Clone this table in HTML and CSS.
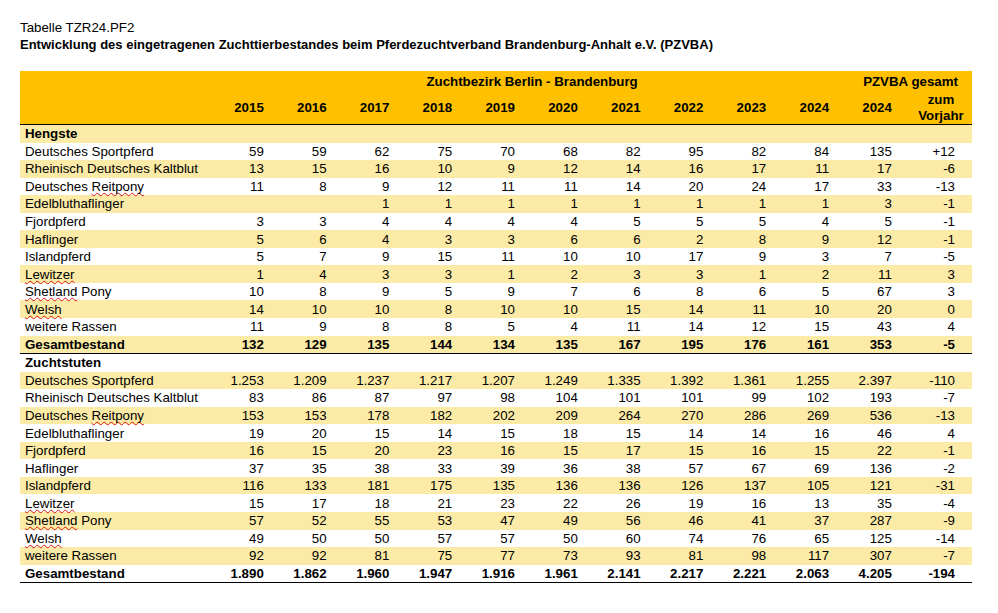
FILE: index.html
```html
<!DOCTYPE html>
<html lang="de">
<head>
<meta charset="utf-8">
<title>Tabelle TZR24.PF2</title>
<link rel="stylesheet" href="styles.css">
</head>
<body>
<div class="page">
  <div class="title">Tabelle TZR24.PF2</div>
  <div class="subtitle">Entwicklung des eingetragenen Zuchttierbestandes beim Pferdezuchtverband Brandenburg-Anhalt e.V. (PZVBA)</div>
  <table class="data">
    <colgroup>
      <col class="c-label">
      <col class="c-num"><col class="c-num"><col class="c-num"><col class="c-num"><col class="c-num">
      <col class="c-num"><col class="c-num"><col class="c-num"><col class="c-num"><col class="c-num">
      <col class="c-num">
      <col class="c-last">
    </colgroup>
    <thead>
      <tr class="h1">
        <th></th>
        <th colspan="10" class="group">Zuchtbezirk Berlin - Brandenburg</th>
        <th colspan="2" class="group2">PZVBA gesamt</th>
      </tr>
      <tr class="h2">
        <th></th>
        <th>2015</th><th>2016</th><th>2017</th><th>2018</th><th>2019</th>
        <th>2020</th><th>2021</th><th>2022</th><th>2023</th><th>2024</th>
        <th>2024</th>
        <th class="vj">zum<br>Vorjahr</th>
      </tr>
    </thead>
    <tbody>
      <tr class="sec"><td>Hengste</td><td></td><td></td><td></td><td></td><td></td><td></td><td></td><td></td><td></td><td></td><td></td><td></td></tr>
      <tr><td>Deutsches Sportpferd</td><td>59</td><td>59</td><td>62</td><td>75</td><td>70</td><td>68</td><td>82</td><td>95</td><td>82</td><td>84</td><td>135</td><td>+12</td></tr>
      <tr><td>Rheinisch Deutsches Kaltblut</td><td>13</td><td>15</td><td>16</td><td>10</td><td>9</td><td>12</td><td>14</td><td>16</td><td>17</td><td>11</td><td>17</td><td>-6</td></tr>
      <tr><td>Deutsches <span class="sp">Reitpony</span></td><td>11</td><td>8</td><td>9</td><td>12</td><td>11</td><td>11</td><td>14</td><td>20</td><td>24</td><td>17</td><td>33</td><td>-13</td></tr>
      <tr><td>Edelbluthaflinger</td><td></td><td></td><td>1</td><td>1</td><td>1</td><td>1</td><td>1</td><td>1</td><td>1</td><td>1</td><td>3</td><td>-1</td></tr>
      <tr><td>Fjordpferd</td><td>3</td><td>3</td><td>4</td><td>4</td><td>4</td><td>4</td><td>5</td><td>5</td><td>5</td><td>4</td><td>5</td><td>-1</td></tr>
      <tr><td>Haflinger</td><td>5</td><td>6</td><td>4</td><td>3</td><td>3</td><td>6</td><td>6</td><td>2</td><td>8</td><td>9</td><td>12</td><td>-1</td></tr>
      <tr><td>Islandpferd</td><td>5</td><td>7</td><td>9</td><td>15</td><td>11</td><td>10</td><td>10</td><td>17</td><td>9</td><td>3</td><td>7</td><td>-5</td></tr>
      <tr><td><span class="sp">Lewitzer</span></td><td>1</td><td>4</td><td>3</td><td>3</td><td>1</td><td>2</td><td>3</td><td>3</td><td>1</td><td>2</td><td>11</td><td>3</td></tr>
      <tr><td><span class="sp">Shetland</span> Pony</td><td>10</td><td>8</td><td>9</td><td>5</td><td>9</td><td>7</td><td>6</td><td>8</td><td>6</td><td>5</td><td>67</td><td>3</td></tr>
      <tr><td><span class="sp">Welsh</span></td><td>14</td><td>10</td><td>10</td><td>8</td><td>10</td><td>10</td><td>15</td><td>14</td><td>11</td><td>10</td><td>20</td><td>0</td></tr>
      <tr><td>weitere Rassen</td><td>11</td><td>9</td><td>8</td><td>8</td><td>5</td><td>4</td><td>11</td><td>14</td><td>12</td><td>15</td><td>43</td><td>4</td></tr>
      <tr class="total"><td>Gesamtbestand</td><td>132</td><td>129</td><td>135</td><td>144</td><td>134</td><td>135</td><td>167</td><td>195</td><td>176</td><td>161</td><td>353</td><td>-5</td></tr>
      <tr class="sec"><td>Zuchtstuten</td><td></td><td></td><td></td><td></td><td></td><td></td><td></td><td></td><td></td><td></td><td></td><td></td></tr>
      <tr><td>Deutsches Sportpferd</td><td>1.253</td><td>1.209</td><td>1.237</td><td>1.217</td><td>1.207</td><td>1.249</td><td>1.335</td><td>1.392</td><td>1.361</td><td>1.255</td><td>2.397</td><td>-110</td></tr>
      <tr><td>Rheinisch Deutsches Kaltblut</td><td>83</td><td>86</td><td>87</td><td>97</td><td>98</td><td>104</td><td>101</td><td>101</td><td>99</td><td>102</td><td>193</td><td>-7</td></tr>
      <tr><td>Deutsches <span class="sp">Reitpony</span></td><td>153</td><td>153</td><td>178</td><td>182</td><td>202</td><td>209</td><td>264</td><td>270</td><td>286</td><td>269</td><td>536</td><td>-13</td></tr>
      <tr><td>Edelbluthaflinger</td><td>19</td><td>20</td><td>15</td><td>14</td><td>15</td><td>18</td><td>15</td><td>14</td><td>14</td><td>16</td><td>46</td><td>4</td></tr>
      <tr><td>Fjordpferd</td><td>16</td><td>15</td><td>20</td><td>23</td><td>16</td><td>15</td><td>17</td><td>15</td><td>16</td><td>15</td><td>22</td><td>-1</td></tr>
      <tr><td>Haflinger</td><td>37</td><td>35</td><td>38</td><td>33</td><td>39</td><td>36</td><td>38</td><td>57</td><td>67</td><td>69</td><td>136</td><td>-2</td></tr>
      <tr><td>Islandpferd</td><td>116</td><td>133</td><td>181</td><td>175</td><td>135</td><td>136</td><td>136</td><td>126</td><td>137</td><td>105</td><td>121</td><td>-31</td></tr>
      <tr><td><span class="sp">Lewitzer</span></td><td>15</td><td>17</td><td>18</td><td>21</td><td>23</td><td>22</td><td>26</td><td>19</td><td>16</td><td>13</td><td>35</td><td>-4</td></tr>
      <tr><td><span class="sp">Shetland</span> Pony</td><td>57</td><td>52</td><td>55</td><td>53</td><td>47</td><td>49</td><td>56</td><td>46</td><td>41</td><td>37</td><td>287</td><td>-9</td></tr>
      <tr><td><span class="sp">Welsh</span></td><td>49</td><td>50</td><td>50</td><td>57</td><td>57</td><td>50</td><td>60</td><td>74</td><td>76</td><td>65</td><td>125</td><td>-14</td></tr>
      <tr><td>weitere Rassen</td><td>92</td><td>92</td><td>81</td><td>75</td><td>77</td><td>73</td><td>93</td><td>81</td><td>98</td><td>117</td><td>307</td><td>-7</td></tr>
      <tr class="total last"><td>Gesamtbestand</td><td>1.890</td><td>1.862</td><td>1.960</td><td>1.947</td><td>1.916</td><td>1.961</td><td>2.141</td><td>2.217</td><td>2.221</td><td>2.063</td><td>4.205</td><td>-194</td></tr>
    </tbody>
  </table>
</div>
</body>
</html>
```

FILE: styles.css
```css
html, body {
  margin: 0;
  padding: 0;
  background: #ffffff;
}

body {
  font-family: "Liberation Sans", Arial, sans-serif;
  font-size: 13.3px;
  color: #000000;
}

.page {
  padding: 20px 0 0 20px;
}

.title {
  line-height: 16px;
  height: 16px;
}

.subtitle {
  font-weight: bold;
  font-size: 13px;
  line-height: 16px;
  height: 16px;
  margin-top: 1px;
}

.data {
  margin-top: 18px;
  width: 952px;
  border-collapse: collapse;
  table-layout: fixed;
  border-spacing: 0;
}

.c-label { width: 185px; }
.c-num { width: 62.8px; }
.c-last { width: 76px; }

.data th,
.data td {
  padding: 0 4px 0 0;
  text-align: right;
  white-space: nowrap;
  vertical-align: middle;
  line-height: 15px;
  overflow: visible;
}

.data thead th {
  background: #ffc000;
  font-weight: bold;
}

.data .h1 th {
  height: 20px;
}

.data .h2 th {
  height: 33px;
  border-bottom: 1px solid #000000;
}

.data th.group {
  text-align: center;
  padding: 0 0 0 26px;
}

.data th.group2 {
  text-align: center;
  padding: 0 0 0 16px;
}

.data th.vj {
  text-align: center;
  padding: 0 0 0 14px;
  line-height: 16px;
}

.data tbody tr {
  height: 17.55px;
}

.data tbody td {
  height: 17.55px;
}

.data tbody td:first-child {
  text-align: left;
  padding-left: 5px;
}

.data tbody td:last-child {
  padding-right: 17px;
}

.data tbody tr:nth-child(odd) {
  background: #fbeba6;
}

.data tr.sec td:first-child,
.data tr.total td {
  font-weight: bold;
}

.data tr.total td {
  border-bottom: 1px solid #000000;
}

.sp {
  text-decoration-line: underline;
  text-decoration-style: wavy;
  text-decoration-color: #e01010;
  text-decoration-thickness: 1px;
  text-underline-offset: 1px;
  text-decoration-skip-ink: none;
}
```
